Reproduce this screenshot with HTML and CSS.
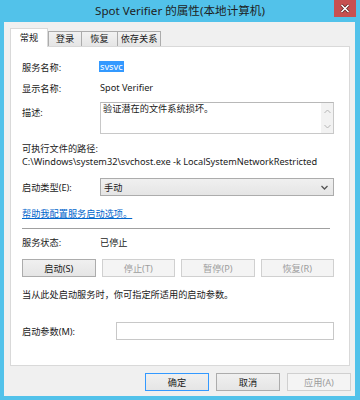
FILE: index.html
```html
<!DOCTYPE html>
<html lang="zh-CN">
<head>
    <meta charset="UTF-8">
    <meta name="viewport" content="width=device-width, initial-scale=1.0">
    <title>Spot Verifier 的属性(本地计算机)</title>
    <link rel="stylesheet" href="styles.css">
</head>
<body>

    <div class="window">
        <div class="titlebar">
            <span></span>
            <span class="title">Spot Verifier 的属性(本地计算机)</span>
            <span class="close">
                <svg width="10" height="9" viewBox="0 0 10 9">
                    <path d="M1.5 1 L8.5 8 M8.5 1 L1.5 8" stroke="#5a2020" stroke-width="3"/>
                    <path d="M1.5 1 L8.5 8 M8.5 1 L1.5 8" stroke="#fff" stroke-width="1.6"/>
                </svg>
            </span>
        </div>

        <div class="client">
            <div class="tabs">
                <span class="tab active">常规</span>
                <span class="tab">登录</span>
                <span class="tab">恢复</span>
                <span class="tab">依存关系</span>
            </div>

            <div class="panel">
                <div class="row">
                    <span class="label">服务名称:</span>
                    <span class="selected">svsvc</span>
                </div>
                <div class="row">
                    <span class="label">显示名称:</span>
                    <span>Spot Verifier</span>
                </div>
                <div class="row desc-row">
                    <span class="label">描述:</span>
                    <div class="desc-box">
                        <div class="desc-text">验证潜在的文件系统损坏。</div>
                        <div class="scrollbar">
                            <svg width="7" height="5" viewBox="0 0 7 5"><path d="M0.5 4 L3.5 1 L6.5 4" fill="none" stroke="#b5b5b5" stroke-width="1"/></svg>
                            <svg width="7" height="5" viewBox="0 0 7 5"><path d="M0.5 1 L3.5 4 L6.5 1" fill="none" stroke="#b5b5b5" stroke-width="1"/></svg>
                        </div>
                    </div>
                </div>

                <div class="line path-label">可执行文件的路径:</div>
                <div class="line path">C:\Windows\system32\svchost.exe -k LocalSystemNetworkRestricted</div>

                <div class="row select-row">
                    <span class="label">启动类型(E):</span>
                    <div class="select">
                        <span>手动</span>
                        <svg width="7" height="5" viewBox="0 0 7 5"><path d="M0.5 1 L3.5 4 L6.5 1" fill="none" stroke="#555" stroke-width="1.3"/></svg>
                    </div>
                </div>

                <a class="line link" href="#">帮助我配置服务启动选项。</a>

                <div class="separator"></div>

                <div class="row status-row">
                    <span class="label">服务状态:</span>
                    <span>已停止</span>
                </div>

                <div class="actions">
                    <button class="btn">启动(S)</button>
                    <button class="btn" disabled>停止(T)</button>
                    <button class="btn" disabled>暂停(P)</button>
                    <button class="btn" disabled>恢复(R)</button>
                </div>

                <div class="line hint">当从此处启动服务时，你可指定所适用的启动参数。</div>

                <div class="row params-row">
                    <span class="label params-label">启动参数(M):</span>
                    <div class="input"></div>
                </div>
            </div>

            <div class="footer">
                <button class="btn default">确定</button>
                <button class="btn">取消</button>
                <button class="btn" disabled>应用(A)</button>
            </div>
        </div>
    </div>

</body>
</html>
```

FILE: styles.css
```css
body {
    margin: 0;
    padding: 0;
    background: #52c2ea;
    font-family: "Noto Sans", "Noto Sans CJK SC", sans-serif;
    font-size: 9.2px;
    color: #1a1a1a;
}

.window {
    width: 360px;
    height: 400px;
    display: flex;
    flex-direction: column;
    background: #52c2ea;
}

.titlebar {
    height: 22px;
    display: grid;
    grid-template-columns: 1fr auto 1fr;
}

.title {
    font-size: 11.6px;
    line-height: 22px;
    color: #1e1e1e;
}

.close {
    justify-self: end;
    width: 22px;
    height: 17px;
    margin-right: 4px;
    background: #c75050;
    display: flex;
    align-items: center;
    justify-content: center;
}

.client {
    flex: 1;
    margin: 0 5px 4px 4px;
    padding: 6px 4px 0 6px;
    background: #f0f0f0;
    display: flex;
    flex-direction: column;
}

/* Pestañas */
.tabs {
    display: flex;
    align-items: flex-end;
    height: 18px;
}

.tab {
    height: 15px;
    line-height: 14px;
    padding: 0;
    text-align: center;
    white-space: nowrap;
    box-sizing: border-box;
    border: 1px solid #acacac;
    border-bottom: none;
    margin-left: -1px;
    background: linear-gradient(#f2f2f2, #e5e5e5);
}

.tab.active {
    height: 19px;
    line-height: 17px;
    width: 38px;
    margin-left: 0;
    background: #fff;
    border-color: #d9d9d9;
    margin-bottom: -1px;
    position: relative;
    z-index: 1;
}

.tab:nth-child(2) {
    width: 34px;
    margin-left: 0;
}

.tab:nth-child(3) {
    width: 37px;
}

.tab:nth-child(4) {
    width: 44px;
}

.panel {
    height: 320px;
    box-sizing: border-box;
    margin-right: 1px;
    background: #fff;
    border: 1px solid #d9d9d9;
    padding: 9px 15px 0 11px;
}

.row {
    display: flex;
    align-items: center;
    height: 21px;
}

.label {
    width: 78px;
    flex-shrink: 0;
}

.selected {
    background: #3399ff;
    color: #fff;
    line-height: 11px;
    padding: 0 1px;
    margin-left: -1px;
}

.desc-row {
    align-items: flex-start;
    height: 32px;
    margin-top: 4px;
}

.desc-row .label {
    padding-top: 5px;
    line-height: 12px;
}

.desc-box {
    flex: 1;
    height: 32px;
    box-sizing: border-box;
    border: 1px solid #c8c8c8;
    border-top-color: #b8b8b8;
    display: flex;
}

.desc-text {
    flex: 1;
    padding: 0 2px;
    line-height: 12px;
}

.scrollbar {
    width: 12px;
    background: #f2f2f2;
    display: flex;
    flex-direction: column;
    justify-content: space-between;
    align-items: center;
    padding: 6px 0 4px;
}

.line {
    display: block;
    line-height: 12px;
}

.path-label {
    margin-top: 9px;
}

.path {
    margin-top: 1px;
}

.select-row {
    height: 18px;
    margin-top: 10px;
}

.select {
    flex: 1;
    height: 18px;
    box-sizing: border-box;
    border: 1px solid #acacac;
    background: linear-gradient(#f0f0f0, #e5e5e5);
    display: flex;
    align-items: center;
    justify-content: space-between;
    padding: 0 5px 0 3px;
}

.link {
    margin-top: 12px;
    color: #0066cc;
    text-decoration: underline;
    width: max-content;
}

.separator {
    margin-top: 8px;
    border-top: 1px solid #a0a0a0;
    margin-right: 4px;
}

.status-row {
    height: 12px;
    margin-top: 7px;
}

.actions {
    margin-top: 11px;
    display: grid;
    grid-template-columns: repeat(4, 1fr);
    gap: 6px;
}

.btn {
    height: 18px;
    padding: 0;
    font-family: inherit;
    font-size: 9.2px;
    color: #1a1a1a;
    border: 1px solid #acacac;
    background: linear-gradient(#f0f0f0, #e5e5e5);
}

.btn:disabled {
    color: #9d9d9d;
    border-color: #d0d0d0;
    background: #f4f4f4;
}

.hint {
    margin-top: 12px;
}

.params-row {
    height: 18px;
    margin-top: 21px;
}

.params-label {
    width: 94px;
}

.input {
    flex: 1;
    height: 18px;
    box-sizing: border-box;
    border: 1px solid #c8c8c8;
    background: #fff;
}

.footer {
    margin-top: 7px;
    display: flex;
    justify-content: flex-end;
    gap: 7px;
}

.footer .btn {
    width: 64px;
}

.footer .btn.default {
    border-color: #3399ff;
}
```
